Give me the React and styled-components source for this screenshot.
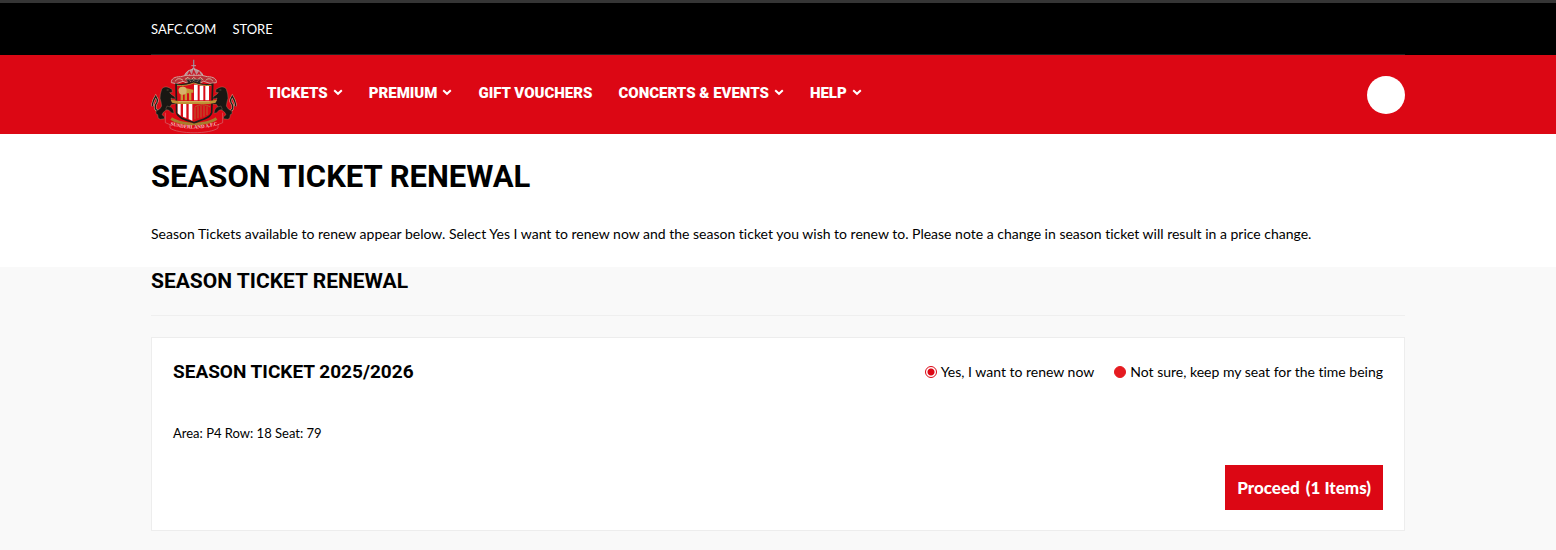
import { useState } from 'react'
import styled, { createGlobalStyle } from 'styled-components'

const GlobalStyle = createGlobalStyle`
  * {
    box-sizing: border-box;
  }

  body {
    margin: 0;
    min-height: 100vh;
    background: #f9f9f9;
    color: #000;
    font-family: Lato, 'Open Sans', sans-serif;
    font-size: 14px;
    font-variant-ligatures: none;
    line-height: 20px;
  }
`;

const Container = styled.div`
  max-width: 1254px;
  margin: 0 auto;
`;

const TopBar = styled.div`
  background: #000;
  border-top: 3px solid #353535;
`;

const TopLinks = styled(Container)`
  display: flex;
  align-items: center;
  gap: 16px;
  height: 52px;
  border-bottom: 1px solid #222;
`;

const TopLink = styled.a`
  color: #fff;
  font-size: 13px;
  text-decoration: none;
`;

const Header = styled.header`
  background: #dc0714;
`;

const HeaderInner = styled(Container)`
  display: flex;
  align-items: center;
  height: 79px;
`;

const CrestLink = styled.a`
  display: block;
  width: 86px;
  padding-top: 4px;
  margin-right: 30px;

  svg {
    display: block;
    width: 100%;
    height: 75px;
  }
`;

const Nav = styled.nav`
  display: flex;
  align-items: center;
  gap: 26px;
  flex: 1;
  padding-bottom: 4px;
`;

const NavLink = styled.a`
  display: flex;
  align-items: center;
  gap: 5px;
  color: #fff;
  font-family: Roboto, sans-serif;
  font-size: 15px;
  font-weight: 900;
  text-decoration: none;
  text-transform: uppercase;
  white-space: nowrap;
`;

const AccountButton = styled.button`
  width: 38px;
  height: 38px;
  padding: 0;
  border: none;
  border-radius: 50%;
  background: #fff;
  cursor: pointer;
`;

const Intro = styled.section`
  padding: 23px 0;
  background: #fff;
`;

const PageTitle = styled.h1`
  margin: 0 0 27px;
  font-family: Roboto, sans-serif;
  font-size: 31px;
  line-height: 40px;
  text-transform: uppercase;
`;

const IntroText = styled.p`
  margin: 0;
`;

const SectionTitle = styled.h2`
  margin: 0 0 21px;
  padding-bottom: 20px;
  border-bottom: 1px solid #efefef;
  font-family: Roboto, sans-serif;
  font-size: 21px;
  line-height: 28px;
  text-transform: uppercase;
`;

const Card = styled.section`
  padding: 20px 21px;
  border: 1px solid #ededed;
  background: #fff;
`;

const CardHeader = styled.div`
  display: flex;
  align-items: center;
  justify-content: space-between;
  margin-bottom: 37px;
`;

const CardTitle = styled.h3`
  margin: 0;
  font-family: Roboto, sans-serif;
  font-size: 19px;
  line-height: 28px;
  text-transform: uppercase;
`;

const Options = styled.div`
  display: flex;
  gap: 20px;
`;

const Option = styled.label`
  display: flex;
  align-items: center;
  gap: 4px;
  cursor: pointer;
`;

const Radio = styled.input`
  appearance: none;
  width: 12px;
  height: 12px;
  margin: 0;
  border: 1px solid #e51b20;
  border-radius: 50%;
  background: #e51b20;

  &:checked {
    border-color: #dc0714;
    background: radial-gradient(circle, #dc0714 0 3px, #fff 4px);
  }
`;

const SeatInfo = styled.p`
  margin: 0 0 22px;
  font-size: 13px;
`;

const CardFooter = styled.div`
  display: flex;
  justify-content: flex-end;
`;

const ProceedButton = styled.button`
  display: flex;
  gap: 6px;
  padding: 12px;
  border: none;
  background: #dc0714;
  color: #fff;
  font-family: inherit;
  font-size: 17px;
  font-weight: 900;
  line-height: 21px;
  cursor: pointer;
`;

const navItems = [
  { label: 'Tickets', menu: true },
  { label: 'Premium', menu: true },
  { label: 'Gift Vouchers', menu: false },
  { label: 'Concerts & Events', menu: true },
  { label: 'Help', menu: true },
]

const renewOptions = [
  { value: 'yes', label: 'Yes, I want to renew now' },
  { value: 'later', label: 'Not sure, keep my seat for the time being' },
]

function Chevron() {
  return (
    <svg width="10" height="8" viewBox="0 0 10 8" fill="none" stroke="#fff" strokeWidth="2" aria-hidden="true">
      <path d="M1.2 1.2 L5 4.8 L8.8 1.2" />
    </svg>
  )
}

function Lion() {
  return (
    <g>
      <path
        d="M56 184 C38 181 41 166 48 157 C53 148 46 144 44 139 C38 149 34 158 34 169"
        fill="none"
        stroke="#d5a890"
        strokeWidth="7"
      />
      <path
        d="M56 184 C38 181 41 166 48 157 C53 148 46 144 44 139 C38 149 34 158 34 169"
        fill="none"
        stroke="#211b16"
        strokeWidth="4"
      />
      <path
        d="M62 118 C66 110 76 109 84 113 L93 118 L94 127 L86 128 L92 134 L101 140 L104 147 L95 146 L90 144 L93 154 L103 154 L103 162 L92 163 L87 170 L82 178 L74 181 L67 187 L63 194 L70 200 L71 206 L58 208 L52 205 L50 194 L45 191 L45 184 L56 177 L62 168 L60 156 L57 145 L58 132 Z"
        fill="#191713"
        stroke="#a58a6c"
        strokeWidth="1.2"
      />
      <path d="M78 168 L91 172 L97 180 L99 190 L91 188 L84 181 L74 178 Z" fill="#191713" stroke="#a58a6c" strokeWidth="1" />
      <path d="M77 120 L83 120" stroke="#776b50" strokeWidth="2" />
    </g>
  )
}

function Crest() {
  return (
    <svg viewBox="30 27 258 225" role="img" aria-label="Sunderland A.F.C.">
      <path d="M158 29 V70" stroke="#9b8291" strokeWidth="4" />
      <path d="M151 47 H165 M153 56 H163" stroke="#b998a0" strokeWidth="3" />
      <path d="M130 80 C133 65 145 59 158 58 C171 59 183 65 187 80 Z" fill="#bd8d91" stroke="#c1b5b1" strokeWidth="3" />
      <path d="M139 79 L145 66 L153 79 L158 62 L166 79 L174 67 L180 80" fill="none" stroke="#c91b29" strokeWidth="4" />
      <path d="M91 98 C90 86 101 80 119 80 L135 76 H182 L199 80 C217 80 228 87 226 98 L207 100 L188 94 L174 101 L158 94 L142 101 L126 94 L106 101 Z" fill="#b92f37" stroke="#d2a29a" strokeWidth="3" />
      <path d="M103 94 C107 84 118 84 126 91 M132 88 L141 82 L149 91 L158 82 L168 91 L178 82 L187 90 M194 91 C202 83 212 86 215 94" fill="none" stroke="#d7b398" strokeWidth="3" />
      <path d="M136 88 H182 L177 102 H142 Z" fill="#292629" stroke="#8f7c69" strokeWidth="2" />
      <path d="M146 91 L152 98 L158 91 L165 98 L172 91" fill="none" stroke="#b8a88e" strokeWidth="2" />

      <Lion />
      <g transform="translate(318 0) scale(-1 1)">
        <Lion />
      </g>

      <path d="M73 188 V218 L87 224 V234 C110 253 208 253 231 234 V224 L245 218 V188" fill="none" stroke="#d46d72" strokeWidth="2" />
      <path d="M93 202 C124 223 195 223 224 202 L229 209 C199 231 119 231 88 209 Z" fill="#a77d2b" />
      <path d="M105 103 C125 108 143 102 158 96 C174 102 195 108 215 103 L212 188 C207 205 180 210 159 218 C137 210 111 205 107 188 Z" fill="#d90b17" stroke="#211d19" strokeWidth="5" />
      <path d="M108 106 C128 108 144 105 158 99 C174 105 193 108 211 106" fill="none" stroke="#b98c36" strokeWidth="3" />
      <path d="M159 104 H170 V151 H159 Z M176 107 H187 V151 H176 Z M193 108 H204 V151 H193 Z" fill="#fff" />
      <path d="M110 162 H119 V197 L110 190 Z M126 162 H136 V204 L126 200 Z M143 162 H154 V212 L143 207 Z" fill="#fff" />
      <path d="M112 120 C116 109 128 108 136 115 L157 119 V128 H151 V151 H144 V130 H138 V151 H131 V132 H126 V151 H119 V132 Z" fill="#c59835" />
      <circle cx="125" cy="122" r="12" fill="#d7b268" />
      <path d="M162 171 C174 162 195 162 207 171 M162 172 V208 M171 169 V205 M180 167 V203 M189 167 V200 M198 169 V195" fill="none" stroke="#b6602f" strokeWidth="3" />
      <path d="M89 149 L113 153 H204 L228 149 L224 158 L204 162 H113 L93 158 Z" fill="#bd9132" />
      <path d="M112 155 H206" stroke="#e2c476" strokeWidth="2" />
      <path id="motto" d="M88 225 Q160 248 240 222" fill="none" />
      <text fill="#f5c8c7" fontFamily="Liberation Serif, serif" fontSize="15" fontWeight="700">
        <textPath href="#motto">SUNDERLAND A.F.C.</textPath>
      </text>
    </svg>
  )
}

export default function App() {
  const [choice, setChoice] = useState('yes')

  return (
    <>
      <GlobalStyle />
      <TopBar>
        <TopLinks>
          <TopLink href="#safc">SAFC.COM</TopLink>
          <TopLink href="#store">STORE</TopLink>
        </TopLinks>
      </TopBar>
      <Header>
        <HeaderInner>
          <CrestLink href="#home">
            <Crest />
          </CrestLink>
          <Nav>
            {navItems.map((item) => (
              <NavLink key={item.label} href="#menu">
                {item.label}
                {item.menu && <Chevron />}
              </NavLink>
            ))}
          </Nav>
          <AccountButton aria-label="Account" />
        </HeaderInner>
      </Header>
      <main>
        <Intro>
          <Container>
            <PageTitle>Season Ticket Renewal</PageTitle>
            <IntroText>
              Season Tickets available to renew appear below. Select Yes I want to renew now and the season ticket you
              wish to renew to. Please note a change in season ticket will result in a price change.
            </IntroText>
          </Container>
        </Intro>
        <Container>
          <SectionTitle>Season Ticket Renewal</SectionTitle>
          <Card>
            <CardHeader>
              <CardTitle>Season Ticket 2025/2026</CardTitle>
              <Options>
                {renewOptions.map((option) => (
                  <Option key={option.value}>
                    <Radio
                      type="radio"
                      name="renewal"
                      value={option.value}
                      checked={choice === option.value}
                      onChange={() => setChoice(option.value)}
                    />
                    {option.label}
                  </Option>
                ))}
              </Options>
            </CardHeader>
            <SeatInfo>Area: P4 Row: 18 Seat: 79</SeatInfo>
            <CardFooter>
              <ProceedButton type="button">
                <span>Proceed</span>
                <span>(1 Items)</span>
              </ProceedButton>
            </CardFooter>
          </Card>
        </Container>
      </main>
    </>
  )
}
